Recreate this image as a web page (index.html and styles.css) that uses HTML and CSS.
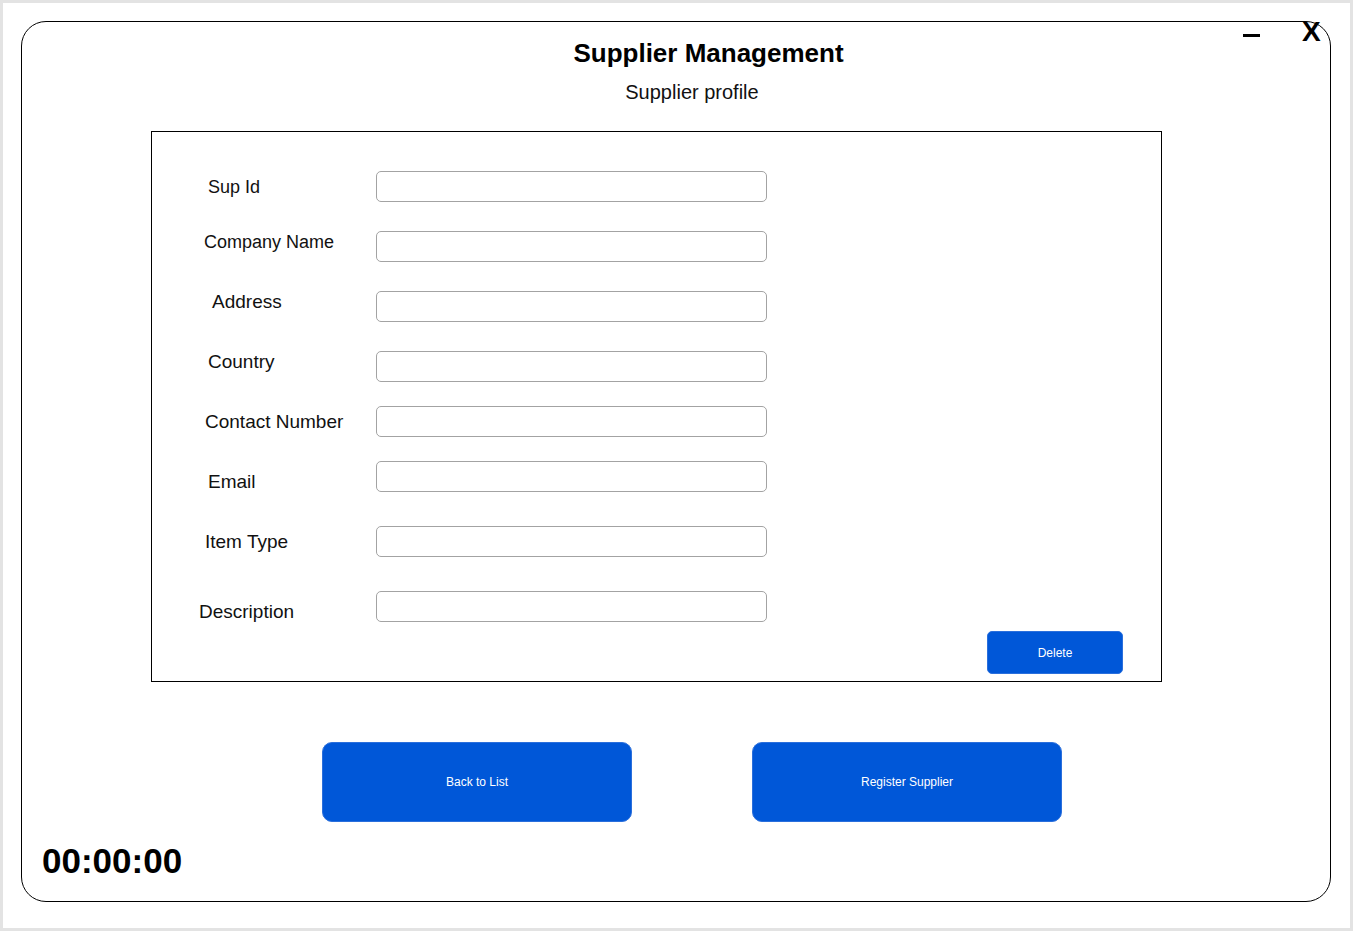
FILE: index.html
```html
<!DOCTYPE html>
<html lang="en">
<head>
<meta charset="utf-8">
<title>Supplier Management</title>
<link rel="stylesheet" href="styles.css">
</head>
<body>
<div class="frame">
  <div class="window">
    <div class="win-min" aria-label="Minimize"></div>
    <div class="win-close">X</div>
    <h1 class="title">Supplier Management</h1>
    <div class="subtitle">Supplier profile</div>
    <form class="profile">
      <div class="field f-id"><label>Sup Id</label><input type="text"></div>
      <div class="field f-company"><label>Company Name</label><input type="text"></div>
      <div class="field f-address"><label>Address</label><input type="text"></div>
      <div class="field f-country"><label>Country</label><input type="text"></div>
      <div class="field f-contact"><label>Contact Number</label><input type="text"></div>
      <div class="field f-email"><label>Email</label><input type="text"></div>
      <div class="field f-item"><label>Item Type</label><input type="text"></div>
      <div class="field f-desc"><label>Description</label><input type="text"></div>
      <div class="form-actions"><button type="button" class="btn btn-small">Delete</button></div>
    </form>
    <div class="actions">
      <button type="button" class="btn btn-big">Back to List</button>
      <button type="button" class="btn btn-big">Register Supplier</button>
    </div>
    <div class="clock">00:00:00</div>
  </div>
</div>
</body>
</html>
```

FILE: styles.css
```css
* { box-sizing: border-box; }
html, body { margin: 0; padding: 0; background: #fff; }
body { font-family: "Liberation Sans", Arial, sans-serif; color: #000; }

.frame {
  width: 1353px;
  height: 931px;
  border: 3px solid #e3e3e3;
  padding: 18px;
}

.window {
  position: relative;
  width: 1310px;
  height: 881px;
  border: 1px solid #000;
  border-radius: 25px;
  display: flex;
  flex-direction: column;
  align-items: flex-start;
}

.win-min {
  position: absolute;
  left: 1221px;
  top: 12px;
  width: 17px;
  height: 3px;
  background: #000;
}
.win-close {
  position: absolute;
  left: 1280px;
  top: -4px;
  font-size: 28px;
  line-height: 28px;
  font-weight: bold;
}

.title {
  align-self: stretch;
  margin: 16px 0 0 0;
  padding-left: 65px;
  text-align: center;
  font-size: 26px;
  line-height: 30px;
  font-weight: bold;
}
.subtitle {
  align-self: stretch;
  margin-top: 13px;
  padding-left: 32px;
  text-align: center;
  font-size: 20px;
  line-height: 23px;
  color: #111;
}

.profile {
  margin: 27px 0 0 129px;
  width: 1011px;
  border: 1px solid #000;
  padding: 39px 0 7px 0;
  display: flex;
  flex-direction: column;
}

.field {
  display: flex;
  align-items: flex-start;
  height: 31px;
}
.field label {
  width: 224px;
  font-size: 19px;
  line-height: 22px;
  color: #111;
  white-space: nowrap;
}
.field input {
  width: 391px;
  height: 31px;
  margin: 0;
  padding: 0 6px;
  border: 1px solid #a3a3a3;
  border-radius: 5px;
  background: #fff;
  font: inherit;
  font-size: 14px;
}

.f-id label { margin-top: 5px; padding-left: 56px; font-size: 18px; }
.f-company { margin-top: 29px; }
.f-company label { margin-top: 0; padding-left: 52px; font-size: 18px; }
.f-address { margin-top: 29px; }
.f-address label { margin-top: 0; padding-left: 60px; }
.f-country { margin-top: 29px; }
.f-country label { margin-top: 0; padding-left: 56px; }
.f-contact { margin-top: 24px; }
.f-contact label { margin-top: 5px; padding-left: 53px; }
.f-email { margin-top: 24px; }
.f-email label { margin-top: 10px; padding-left: 56px; }
.f-item { margin-top: 34px; }
.f-item label { margin-top: 5px; padding-left: 53px; }
.f-desc { margin-top: 34px; }
.f-desc label { margin-top: 10px; padding-left: 47px; }

.form-actions {
  display: flex;
  justify-content: flex-end;
  margin-top: 9px;
  padding-right: 38px;
}

.btn {
  background: #0057d8;
  color: #fff;
  border: 1px solid #2a6fdc;
  font-family: "Liberation Sans", Arial, sans-serif;
  font-size: 12px;
  padding: 0;
  cursor: pointer;
}
.btn-small {
  width: 136px;
  height: 43px;
  border-radius: 5px;
}
.btn-big {
  width: 310px;
  height: 80px;
  border-radius: 10px;
}

.actions {
  display: flex;
  gap: 120px;
  margin: 60px 0 0 300px;
}

.clock {
  margin: 19px 0 0 20px;
  font-size: 35px;
  line-height: 40px;
  font-weight: bold;
}
```
